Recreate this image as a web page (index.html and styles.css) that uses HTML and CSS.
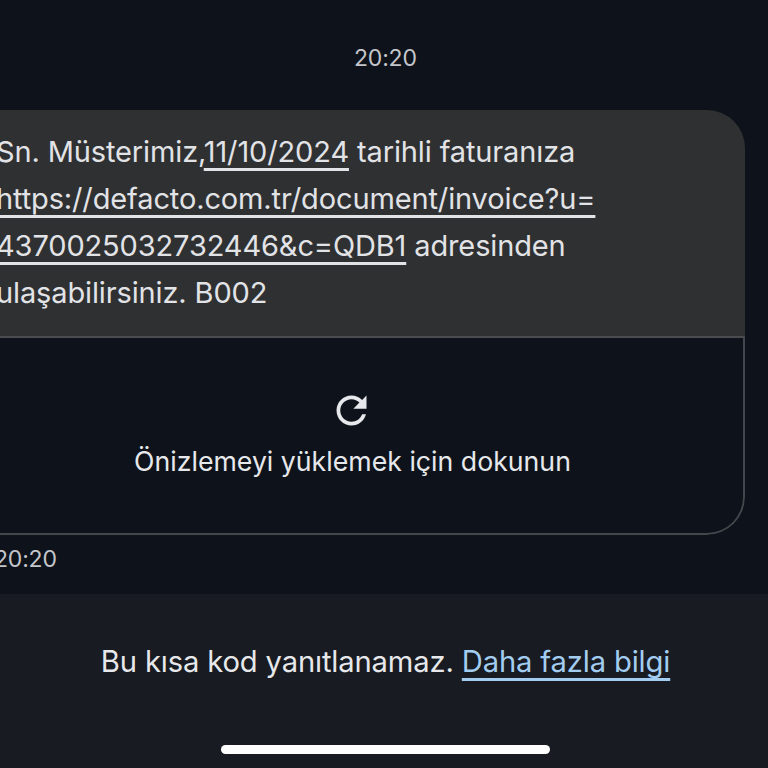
FILE: index.html
```html
<!DOCTYPE html>
<html lang="tr">
<head>
<meta charset="utf-8">
<title>Mesaj</title>
<link rel="stylesheet" href="styles.css">
</head>
<body>
<main class="thread">
  <div class="stamp">20:20</div>
  <article class="bubble">
    <div class="body">
      <p class="line">Sn. Müsterimiz,<a class="link">11/10/2024</a> tarihli faturanıza</p>
      <p class="line"><a class="link">https://defacto.com.tr/document/invoice?u=</a></p>
      <p class="line"><a class="link">4370025032732446&amp;c=QDB1</a> adresinden</p>
      <p class="line">ulaşabilirsiniz. B002</p>
    </div>
    <div class="preview">
      <svg class="reload" viewBox="0 0 24 24" width="45" height="45" aria-hidden="true">
        <path fill="currentColor" d="M17.65 6.35C16.2 4.9 14.21 4 12 4c-4.42 0-7.99 3.58-7.99 8s3.57 8 7.99 8c3.73 0 6.84-2.55 7.73-6h-2.08c-.82 2.33-3.04 4-5.65 4-3.31 0-6-2.69-6-6s2.69-6 6-6c1.66 0 3.14.69 4.22 1.78L13 11h7V4l-2.35 2.35z"/>
      </svg>
      <span class="preview-label">Önizlemeyi yüklemek için dokunun</span>
    </div>
  </article>
  <div class="time">20:20</div>
</main>
<footer class="footer">
  <p class="notice">Bu kısa kod yanıtlanamaz. <a class="more">Daha fazla bilgi</a></p>
  <div class="home"></div>
</footer>
</body>
</html>
```
FILE: styles.css
```css
* { box-sizing: border-box; }
html, body { margin: 0; height: 768px; overflow: hidden; }
body {
  display: flex;
  flex-direction: column;
  background: #0e131b;
  color: #e6e7ea;
  font-family: Inter, Roboto, sans-serif;
}
.thread { height: 594px; padding-top: 43px; }
.stamp { height: 67px; padding-left: 354px; font-size: 23px; letter-spacing: -0.2px; line-height: 30px; color: #c4c6cb; }
.bubble { width: 785px; margin-left: -40px; border-radius: 38px; overflow: hidden; }
.body { height: 226px; padding: 18px 0 0 36px; background: #2f3032; }
.line { margin: 0; font-size: 29px; letter-spacing: -0.13px; line-height: 47px; white-space: nowrap; color: #e2e3e6; }
.link { text-decoration: underline; text-decoration-thickness: 2.5px; text-underline-offset: 6px; }
.preview {
  height: 199px;
  display: flex;
  flex-direction: column;
  align-items: center;
  padding-top: 50px;
  gap: 12px;
  border: 2px solid #43464b;
  border-top-color: #4a4c50;
  border-radius: 0 0 38px 38px;
}
.reload { color: #e6e8eb; margin-right: 3px; }
.preview-label { font-size: 26.7px; line-height: 32px; color: #e6e8eb; }
.time { margin-top: 9px; margin-left: -6px; font-size: 23px; letter-spacing: -0.2px; line-height: 30px; color: #c4c6cb; }
.footer { flex: 1; background: #181b21; display: flex; flex-direction: column; align-items: center; }
.notice { margin: 49px 0 0; padding-left: 3px; font-size: 29.2px; letter-spacing: -0.15px; line-height: 38px; color: #e6e8eb; white-space: nowrap; }
.more { color: #a3cdf0; text-decoration: underline; text-decoration-thickness: 2.5px; text-underline-offset: 6px; }
.home { width: 329px; height: 9px; margin: 64px 0 0 3px; border-radius: 5px; background: #fff; }
```
